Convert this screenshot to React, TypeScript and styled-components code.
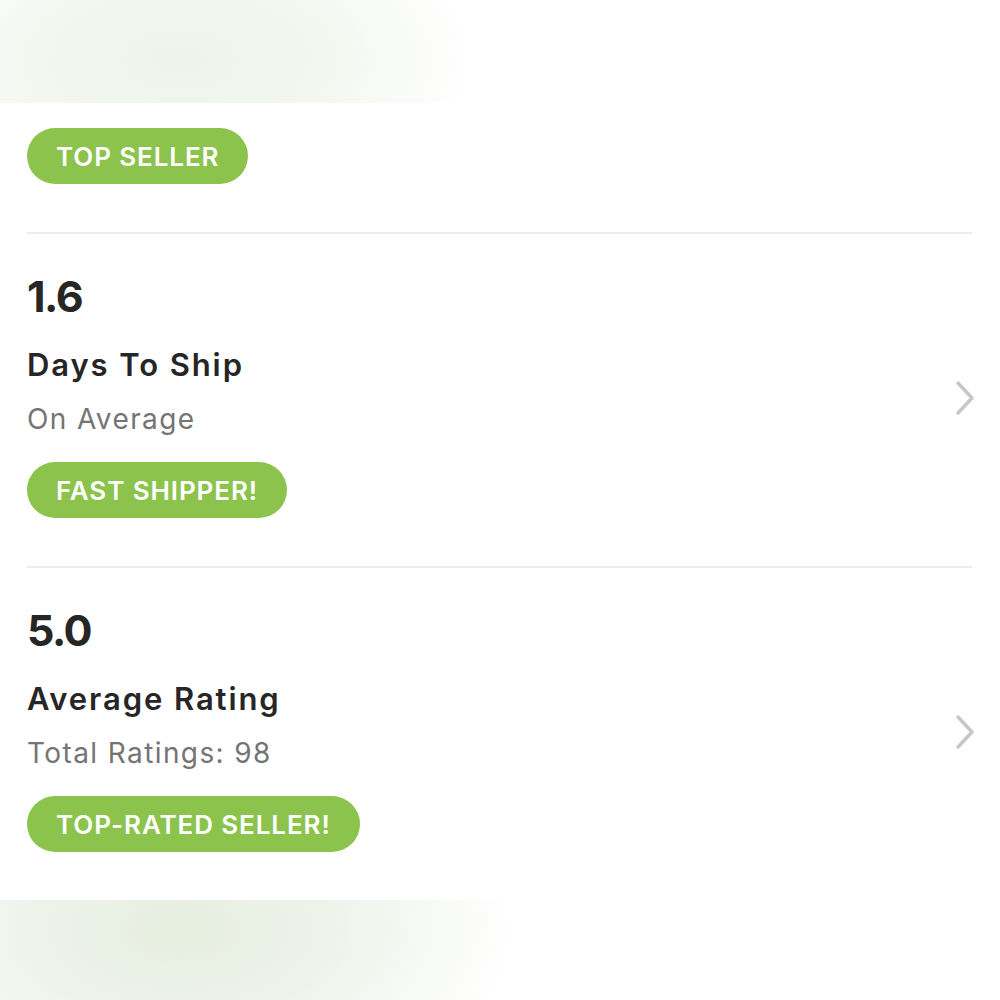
import styled, { createGlobalStyle } from "styled-components";

const GlobalStyle = createGlobalStyle`
	html, body {
		margin: 0;
		padding: 0;
		background: #fff;
	}
	* {
		box-sizing: border-box;
	}
`;

const Page = styled.div`
	width: 1000px;
	height: 1000px;
	display: flex;
	flex-direction: column;
	background: #fff;
	font-family: Inter, "Liberation Sans", sans-serif;
	overflow: hidden;
`;

const FadeBand = styled.div<{ $bottom?: boolean }>`
	height: 103px;
	flex: none;
	background: ${(p) =>
		p.$bottom
			? "radial-gradient(ellipse 340px 190px at 180px 30px, #e6eedf 0%, #eef3ea 45%, rgba(255,255,255,0) 100%)"
			: "radial-gradient(ellipse 300px 160px at 180px 60px, #eef4ea 0%, #f3f7f0 50%, rgba(255,255,255,0) 100%)"};
`;

const Content = styled.div`
	flex: 1;
	padding: 0 28px 0 27px;
	display: flex;
	flex-direction: column;
`;

const TopBlock = styled.div`
	padding: 25px 0 48px;
`;

const Divider = styled.div`
	height: 2px;
	background: #ececec;
`;

const Section = styled.div`
	display: flex;
	align-items: center;
	padding: 35px 0 48px;
`;

const Info = styled.div`
	flex: 1;
	display: flex;
	flex-direction: column;
	align-items: flex-start;
`;

const Value = styled.div`
	font-size: 43px;
	line-height: 54px;
	font-weight: 700;
	color: #262626;
	letter-spacing: -1.5px;
`;

const Title = styled.div`
	margin-top: 22px;
	font-size: 31px;
	line-height: 40px;
	font-weight: 600;
	color: #262626;
	letter-spacing: 1.9px;
`;

const Sub = styled.div`
	margin-top: 16px;
	font-size: 28px;
	line-height: 36px;
	font-weight: 400;
	color: #747474;
	letter-spacing: 1.4px;
`;

const Pill = styled.div<{ $spaced?: boolean }>`
	margin-top: ${(p) => (p.$spaced ? "25px" : "0")};
	height: 56px;
	padding: 0 29px 0 29px;
	border-radius: 28px;
	background: #8bc34c;
	color: #fff;
	font-size: 26px;
	font-weight: 600;
	letter-spacing: 0.9px;
	display: inline-flex;
	align-items: center;
`;

const Chevron = styled.svg`
	flex: none;
	width: 26px;
	height: 36px;
	margin: 8px -6px 0 0;
`;

function Arrow() {
	return (
		<Chevron viewBox="0 0 26 36" fill="none">
			<path d="M6 3 L20 18 L6 33" stroke="#c6c6ca" strokeWidth="3.4" strokeLinecap="round" strokeLinejoin="round" />
		</Chevron>
	);
}

const stats = [
	{ value: "1.6", title: "Days To Ship", sub: "On Average", badge: "FAST SHIPPER!" },
	{ value: "5.0", title: "Average Rating", sub: "Total Ratings: 98", badge: "TOP-RATED SELLER!" },
];

function App() {
	return (
		<Page>
			<GlobalStyle />
			<FadeBand />
			<Content>
				<TopBlock>
					<Pill>TOP SELLER</Pill>
				</TopBlock>
				{stats.map((s) => (
					<div key={s.title}>
						<Divider />
						<Section>
							<Info>
								<Value>{s.value}</Value>
								<Title>{s.title}</Title>
								<Sub>{s.sub}</Sub>
								<Pill $spaced>{s.badge}</Pill>
							</Info>
							<Arrow />
						</Section>
					</div>
				))}
			</Content>
			<FadeBand $bottom />
		</Page>
	);
}

export default App;
